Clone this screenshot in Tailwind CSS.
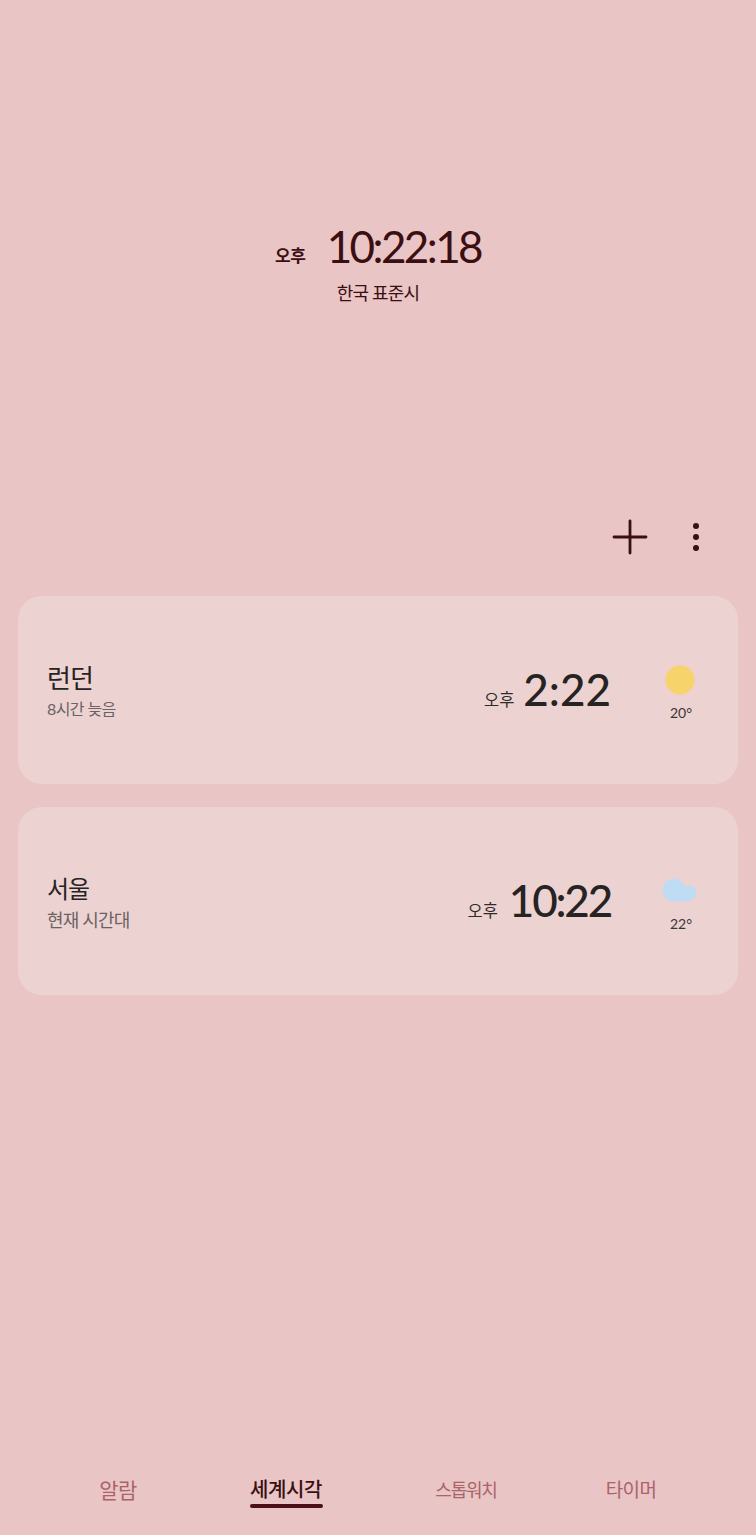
<!DOCTYPE html>
<html lang="ko"><head><meta charset="utf-8"><script src="https://cdn.jsdelivr.net/npm/@tailwindcss/browser@4"></script></head>
<body class="m-0">
<div class="w-[756px] h-[1535px] bg-[#e9c5c5] flex flex-col overflow-hidden font-['Lato','Noto_Sans_CJK_KR',sans-serif]">
  <header class="h-[506px] pt-[222px] flex flex-col items-center shrink-0 text-[#3b0f12]">
    <div class="flex items-baseline h-[48px] leading-[48px]">
      <span class="text-[17px] font-bold mr-[21px] tracking-[-0.3px] relative top-[-1px]">오후</span>
      <span class="text-[44px] tracking-[-2.6px]">10:22:18</span>
    </div>
    <div class="text-[18px] leading-[28px] mt-[9px] tracking-[-0.8px]">한국 표준시</div>
  </header>
  <div class="h-[62px] flex justify-end items-center pr-[56px] gap-[44px] shrink-0">
    <svg class="w-[36px] h-[36px]" viewBox="0 0 36 36" fill="none" stroke="#3b0f12" stroke-width="2.8" stroke-linecap="round"><path d="M18 2V34M2 18H34"/></svg>
    <svg class="w-[8px] h-[32px]" viewBox="0 0 8 32" fill="#3b0f12"><circle cx="4" cy="5" r="3"/><circle cx="4" cy="16" r="3"/><circle cx="4" cy="27" r="3"/></svg>
  </div>
  <main class="pt-[28px] px-[18px] flex flex-col gap-[23px]">
    <section class="h-[188px] rounded-[24px] bg-[#edd2d2] flex items-center pl-[29px] pr-[38px] text-[#262323]">
      <div class="flex-1 relative top-[1px]">
        <div class="text-[26px] leading-[32px] tracking-[-0.8px]">런던</div>
        <div class="text-[16px] leading-[22px] mt-[4px] text-[#6b6363] tracking-[-0.6px]">8시간 늦음</div>
      </div>
      <div class="flex items-baseline mr-[49px] relative top-[-1px]">
        <span class="text-[16.5px] mr-[9px] text-[#2f2b2b]">오후</span>
        <span class="text-[44px] leading-[48px] font-medium">2:22</span>
      </div>
      <div class="w-[40px] flex flex-col items-center relative top-[4px]">
        <div class="w-[28px] h-[28px] rounded-full bg-[#f6d36b] shadow-[0_0_3px_#f6d36b]"></div>
        <div class="text-[14px] leading-[20px] mt-[9px] text-[#3b3535] relative left-[1px]">20°</div>
      </div>
    </section>
    <section class="h-[188px] rounded-[24px] bg-[#edd2d2] flex items-center pl-[29px] pr-[38px] text-[#262323]">
      <div class="flex-1 relative top-[1px]">
        <div class="text-[24px] leading-[32px] tracking-[-1.2px]">서울</div>
        <div class="text-[18px] leading-[22px] mt-[4px] text-[#6b6363] tracking-[-0.8px]">현재 시간대</div>
      </div>
      <div class="flex items-baseline mr-[49px] relative top-[-1px]">
        <span class="text-[16.5px] mr-[11px] text-[#2f2b2b]">오후</span>
        <span class="text-[44px] leading-[48px] tracking-[-2.2px] font-medium">10:22</span>
      </div>
      <div class="w-[40px] flex flex-col items-center relative top-[5px]">
        <svg class="w-[36px] h-[26px]" viewBox="0 0 36 26" fill="#bfdcf5"><circle cx="12" cy="12" r="11.5"/><circle cx="27" cy="15" r="7.5"/><rect x="12" y="14" width="15" height="9.5" rx="4"/></svg>
        <div class="text-[14px] leading-[20px] mt-[10px] text-[#3b3535] relative left-[1px]">22°</div>
      </div>
    </section>
  </main>
  <nav class="mt-auto h-[65px] grid grid-cols-[168px_168px_192px_138px] pl-[34px] text-[#a9636a] shrink-0">
    <div class="text-center text-[21px] tracking-[-0.6px] leading-[30px] pt-[5px]">알람</div>
    <div class="pt-[5px] flex flex-col items-center"><span class="text-[20px] tracking-[-0.4px] leading-[29px] text-[#3b0f12] font-medium">세계시각</span><span class="w-[73px] h-[4px] rounded-full bg-[#4a1216]"></span></div>
    <div class="text-center text-[18px] tracking-[-1.2px] leading-[30px] pt-[5px]">스톱워치</div>
    <div class="text-center text-[19px] tracking-[-0.6px] leading-[30px] pt-[5px]">타이머</div>
  </nav>
</div>
</body></html>
